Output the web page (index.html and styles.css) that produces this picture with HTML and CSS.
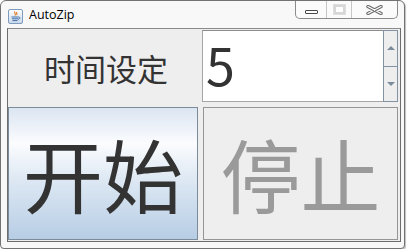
FILE: index.html
```html
<!DOCTYPE html>
<html lang="zh-CN">
<head>
    <meta charset="UTF-8">
    <title>AutoZip</title>
    <link rel="stylesheet" href="styles.css">
</head>
<body>
    <div class="window">
        <div class="titlebar">
            <svg class="app-icon" width="15" height="15" viewBox="0 0 15 15">
                <defs>
                    <linearGradient id="iconBg" x1="0" y1="0" x2="0" y2="1">
                        <stop offset="0" stop-color="#ffffff"/>
                        <stop offset="1" stop-color="#c9d9ea"/>
                    </linearGradient>
                </defs>
                <rect x="0.5" y="0.5" width="14" height="14" rx="1.5" fill="url(#iconBg)" stroke="#7d9cbf"/>
                <path d="M7 2.5 C5.5 4 8.5 4.5 7 6.5 M8.8 3 C8 4 9.6 4.6 8.6 6" fill="none" stroke="#e2731e" stroke-width="1.1"/>
                <path d="M3.5 8 H10.5 M4 9.8 H10 M4.5 11.6 H9.5 M10.5 8 C12.5 8 12.5 10 10 10.3" fill="none" stroke="#3f6fa8" stroke-width="1"/>
            </svg>
            <span class="title">AutoZip</span>
            <div class="caption-buttons">
                <span class="cap cap-min"><i class="min-glyph"></i></span>
                <span class="cap cap-max"><i class="max-glyph"></i></span>
                <span class="cap cap-close">
                    <svg width="17" height="10" viewBox="0 0 17 10">
                        <path d="M2 1.5 L15 8.5 M15 1.5 L2 8.5" stroke="#6b6b6b" stroke-width="3.4" stroke-linecap="round"/>
                        <path d="M2 1.5 L15 8.5 M15 1.5 L2 8.5" stroke="#ffffff" stroke-width="1.4" stroke-linecap="round"/>
                    </svg>
                </span>
            </div>
        </div>

        <div class="content">
            <div class="time-label">时间设定</div>
            <div class="spinner">
                <div class="spinner-field">5</div>
                <div class="spinner-arrows">
                    <span class="arrow-btn"><i class="arrow up"></i></span>
                    <span class="arrow-btn"><i class="arrow down"></i></span>
                </div>
            </div>
            <button class="btn btn-start" type="button">开始</button>
            <button class="btn btn-stop" type="button" disabled>停止</button>
        </div>
    </div>
</body>
</html>
```

FILE: styles.css
```css
body {
    margin: 0;
    padding: 0;
    background-color: #ffffff;
    font-family: 'Noto Sans CJK SC', sans-serif;
}

.window {
    box-sizing: border-box;
    width: 405px;
    height: 249px;
    border: 1px solid #727272;
    border-radius: 6px 6px 4px 4px;
    background-color: #f8f8f8;
    padding: 0 3px 0 6px;
    box-shadow: 1px 1px 1px rgba(0, 0, 0, 0.25);
}

.titlebar {
    display: flex;
    align-items: flex-start;
    height: 27px;
}

.app-icon {
    display: block;
    margin: 8px 0 0 1px;
}

.title {
    font-family: 'Open Sans', sans-serif;
    font-size: 12.5px;
    color: #000;
    margin: 5px 0 0 6px;
}

.caption-buttons {
    display: flex;
    margin-left: auto;
    margin-right: 3px;
    height: 18px;
    box-sizing: border-box;
    border: 1px solid #8b8b8b;
    border-top: none;
    border-radius: 0 0 5px 5px;
    background-color: #fbfbfb;
}

.cap {
    display: flex;
    align-items: center;
    justify-content: center;
    height: 17px;
}

.cap-min {
    width: 30px;
    border-right: 1px solid #c6c6c6;
}

.cap-max {
    width: 24px;
    border-right: 1px solid #c6c6c6;
}

.cap-close {
    width: 45px;
}

.min-glyph {
    display: block;
    width: 11px;
    height: 2px;
    margin-top: 5px;
    border: 1px solid #4a4a4a;
    background-color: #fff;
    border-radius: 1px;
}

.max-glyph {
    display: block;
    width: 7px;
    height: 5px;
    border: 2px solid #d6d6d6;
    outline: 1px solid #dedede;
    background-color: #fff;
}

.content {
    box-sizing: border-box;
    width: 394px;
    height: 214px;
    border: 1px solid #6c6c6c;
    border-top-color: #8a8a8a;
    background-color: #eeeeee;
    display: grid;
    grid-template-columns: 190px 195px;
    grid-template-rows: 77px 133px;
    column-gap: 5px;
    row-gap: 1px;
    padding: 0 2px 1px 0;
}

.time-label {
    display: flex;
    align-items: center;
    justify-content: center;
    font-size: 31px;
    color: #333;
    padding-left: 6px;
}

.spinner {
    display: flex;
    margin-top: 1px;
    margin-left: -1px;
    height: 72px;
}

.spinner-field {
    flex: 1;
    box-sizing: border-box;
    background-color: #fff;
    border: 1px solid #a5a5a5;
    border-top-color: #8c8c8c;
    border-right: none;
    font-size: 52px;
    line-height: 66px;
    color: #333;
    padding-left: 3px;
}

.spinner-arrows {
    display: flex;
    flex-direction: column;
    width: 15px;
}

.arrow-btn {
    flex: 1;
    display: flex;
    align-items: center;
    justify-content: center;
    background-color: #eeeeee;
    border: 1px solid #8393a3;
}

.arrow-btn + .arrow-btn {
    border-top: none;
}

.arrow {
    display: block;
    width: 0;
    height: 0;
    border-left: 4px solid transparent;
    border-right: 4px solid transparent;
}

.arrow.up {
    border-bottom: 4px solid #7b8b9b;
}

.arrow.down {
    border-top: 4px solid #7b8b9b;
}

.btn {
    margin: 0;
    padding: 0 0 4px;
    font-family: 'Noto Sans CJK SC', sans-serif;
    font-size: 80px;
    line-height: 1;
}

.btn-start {
    border: 1px solid #7b8b9a;
    color: #333;
    background: linear-gradient(to bottom, #dbe5f1 0%, #fbfcfe 27%, #dde8f3 55%, #b7cde5 100%);
}

.btn-stop {
    border: 1px solid #959595;
    color: #9a9a9a;
    background-color: #eeeeee;
}
```
